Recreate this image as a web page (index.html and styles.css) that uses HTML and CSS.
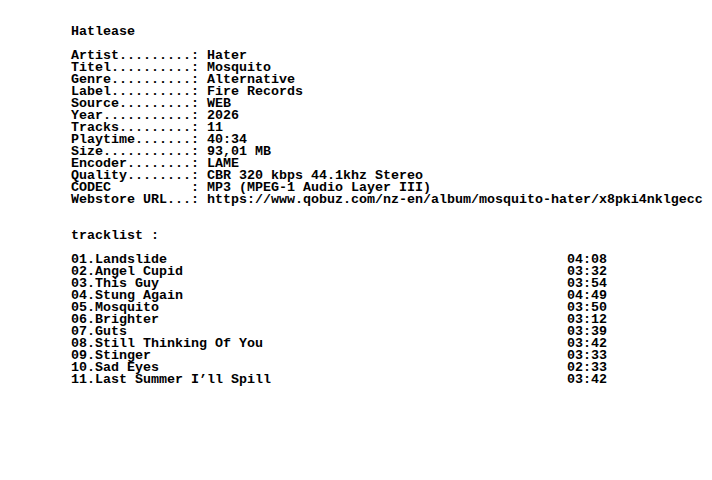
FILE: index.html
```html
<!DOCTYPE html>
<html>
<head>
<meta charset="utf-8">
<link rel="stylesheet" href="styles.css">
</head>
<body>
<main class="nfo">
<pre class="block">Hatlease

Artist.........: Hater
Titel..........: Mosquito
Genre..........: Alternative
Label..........: Fire Records
Source.........: WEB
Year...........: 2026
Tracks.........: 11
Playtime.......: 40:34
Size...........: 93,01 MB
Encoder........: LAME
Quality........: CBR 320 kbps 44.1khz Stereo
CODEC          : MP3 (MPEG-1 Audio Layer III)
Webstore URL...: https://www.qobuz.com/nz-en/album/mosquito-hater/x8pki4nklgecc


tracklist :
</pre>
<ol class="tracks">
<li class="track"><span class="name">01.Landslide</span><span class="time">04:08</span></li>
<li class="track"><span class="name">02.Angel Cupid</span><span class="time">03:32</span></li>
<li class="track"><span class="name">03.This Guy</span><span class="time">03:54</span></li>
<li class="track"><span class="name">04.Stung Again</span><span class="time">04:49</span></li>
<li class="track"><span class="name">05.Mosquito</span><span class="time">03:50</span></li>
<li class="track"><span class="name">06.Brighter</span><span class="time">03:12</span></li>
<li class="track"><span class="name">07.Guts</span><span class="time">03:39</span></li>
<li class="track"><span class="name">08.Still Thinking Of You</span><span class="time">03:42</span></li>
<li class="track"><span class="name">09.Stinger</span><span class="time">03:33</span></li>
<li class="track"><span class="name">10.Sad Eyes</span><span class="time">02:33</span></li>
<li class="track"><span class="name">11.Last Summer I’ll Spill</span><span class="time">03:42</span></li>
</ol>
</main>
</body>
</html>
```

FILE: styles.css
```css
html, body {
  margin: 0;
  background: #ffffff;
}
body {
  color: #000000;
  font-family: "Liberation Mono", "DejaVu Sans Mono", monospace;
  font-weight: bold;
  font-size: 13.3333px;
  line-height: 12px;
}
.nfo {
  padding: 26px 0 0 71px;
}
.block {
  margin: 0;
  font: inherit;
  white-space: pre;
}
.tracks {
  list-style: none;
  margin: 12px 0 0 0;
  padding: 0;
}
.track {
  display: flex;
  white-space: pre;
}
.name {
  width: 496px;
}
```
